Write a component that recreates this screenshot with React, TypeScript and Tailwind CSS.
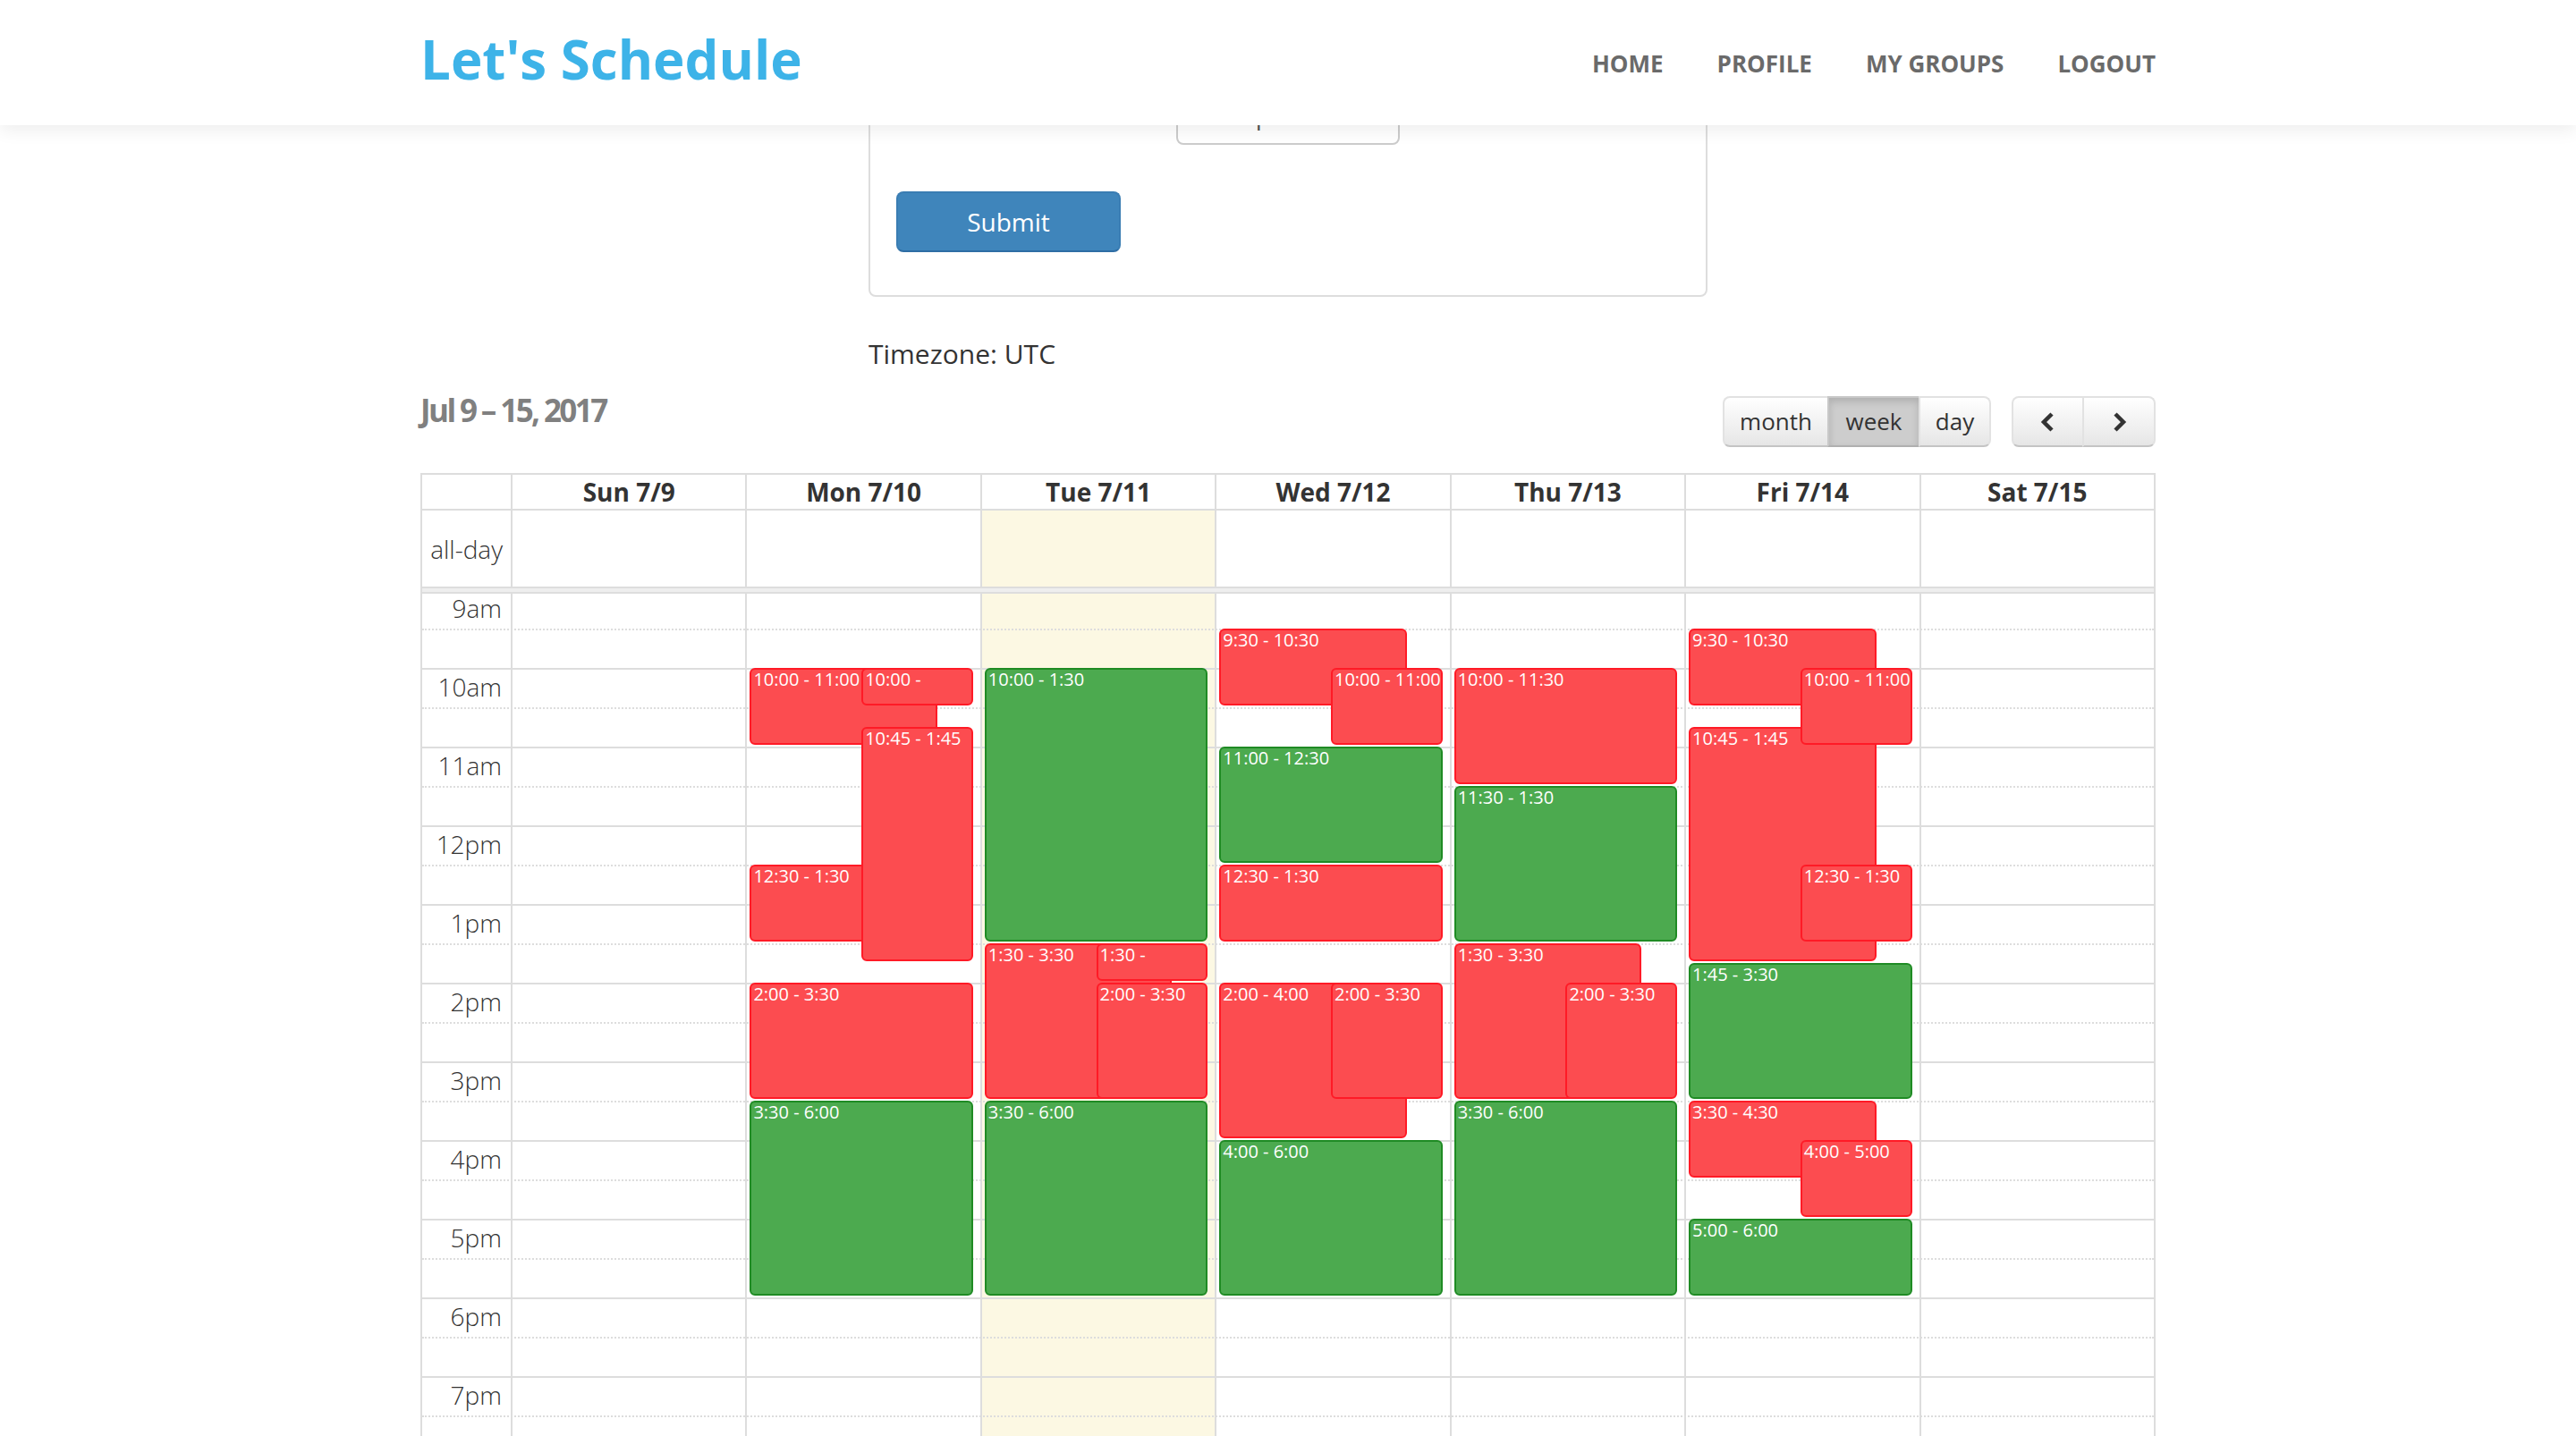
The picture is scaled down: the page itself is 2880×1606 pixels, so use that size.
import React from 'react';

type Ev = { s: number; e: number; t: string; green?: boolean; half?: boolean; push?: boolean };

const HOUR = 88;
const FIRST = 9;
// the 9am slot is scrolled 5px up under the all-day divider
const SCROLL = 5;

const days: { label: string; today?: boolean; events: Ev[] }[] = [
  { label: 'Sun 7/9', events: [] },
  {
    label: 'Mon 7/10',
    events: [
      { s: 10, e: 11, t: '10:00 - 11:00', push: true },
      { s: 12.5, e: 13.5, t: '12:30 - 1:30', push: true },
      { s: 14, e: 15.5, t: '2:00 - 3:30' },
      { s: 15.5, e: 18, t: '3:30 - 6:00', green: true },
      { s: 10, e: 10.5, t: '10:00 -', half: true },
      { s: 10.75, e: 13.75, t: '10:45 - 1:45', half: true },
    ],
  },
  {
    label: 'Tue 7/11',
    today: true,
    events: [
      { s: 10, e: 13.5, t: '10:00 - 1:30', green: true },
      { s: 13.5, e: 15.5, t: '1:30 - 3:30', push: true },
      { s: 15.5, e: 18, t: '3:30 - 6:00', green: true },
      { s: 13.5, e: 14, t: '1:30 -', half: true },
      { s: 14, e: 15.5, t: '2:00 - 3:30', half: true },
    ],
  },
  {
    label: 'Wed 7/12',
    events: [
      { s: 9.5, e: 10.5, t: '9:30 - 10:30', push: true },
      { s: 11, e: 12.5, t: '11:00 - 12:30', green: true },
      { s: 12.5, e: 13.5, t: '12:30 - 1:30' },
      { s: 14, e: 16, t: '2:00 - 4:00', push: true },
      { s: 16, e: 18, t: '4:00 - 6:00', green: true },
      { s: 10, e: 11, t: '10:00 - 11:00', half: true },
      { s: 14, e: 15.5, t: '2:00 - 3:30', half: true },
    ],
  },
  {
    label: 'Thu 7/13',
    events: [
      { s: 10, e: 11.5, t: '10:00 - 11:30' },
      { s: 11.5, e: 13.5, t: '11:30 - 1:30', green: true },
      { s: 13.5, e: 15.5, t: '1:30 - 3:30', push: true },
      { s: 15.5, e: 18, t: '3:30 - 6:00', green: true },
      { s: 14, e: 15.5, t: '2:00 - 3:30', half: true },
    ],
  },
  {
    label: 'Fri 7/14',
    events: [
      { s: 9.5, e: 10.5, t: '9:30 - 10:30', push: true },
      { s: 10.75, e: 13.75, t: '10:45 - 1:45', push: true },
      { s: 13.75, e: 15.5, t: '1:45 - 3:30', green: true },
      { s: 15.5, e: 16.5, t: '3:30 - 4:30', push: true },
      { s: 17, e: 18, t: '5:00 - 6:00', green: true },
      { s: 10, e: 11, t: '10:00 - 11:00', half: true },
      { s: 12.5, e: 13.5, t: '12:30 - 1:30', half: true },
      { s: 16, e: 17, t: '4:00 - 5:00', half: true },
    ],
  },
  { label: 'Sat 7/15', events: [] },
];

// visible hours of the week view (the rest is scrolled away)
const hours = ['9am', '10am', '11am', '12pm', '1pm', '2pm', '3pm', '4pm', '5pm', '6pm', '7pm'];

function Chevron({ dir }: { dir: 'left' | 'right' }) {
  return (
    <svg width="17" height="24" viewBox="0 0 17 24" fill="none">
      <polyline
        points={dir === 'left' ? '13,3 4,12 13,21' : '4,3 13,12 4,21'}
        stroke="#333"
        strokeWidth="4.5"
        strokeLinejoin="miter"
      />
    </svg>
  );
}

function EventBox({ ev }: { ev: Ev }) {
  return (
    <div
      className={`absolute overflow-hidden rounded-[6px] border-2 px-[2px] text-[20px] leading-[22px] whitespace-nowrap text-white ${
        ev.green ? 'bg-[#4caa4f] border-[#1f8b24]' : 'bg-[#fc4c50] border-[#ff1a26]'
      }`}
      style={{
        top: (ev.s - FIRST) * HOUR - SCROLL,
        height: (ev.e - ev.s) * HOUR - 2,
        left: ev.half ? '50%' : 0,
        right: 0,
        marginRight: ev.push ? 40 : 0,
      }}
    >
      {ev.t}
    </div>
  );
}

export default function App() {
  return (
    <div className="relative h-[1606px] overflow-hidden bg-white font-['Open_Sans',sans-serif] text-[#333]">
      {/* top bar */}
      <header className="absolute inset-x-0 top-0 z-20 h-[140px] bg-white shadow-[0_6px_18px_rgba(0,0,0,0.07)]">
        <div className="mx-auto flex h-full w-[1940px] items-center justify-between">
          <div className="pb-[8px] text-[60px] font-bold leading-[80px] text-[#3db3e8]">Let's Schedule</div>
          <nav className="flex items-center gap-[60px] pt-[2px] text-[26px] font-bold text-[#6a6a6a]">
            <span>HOME</span>
            <span>PROFILE</span>
            <span>MY GROUPS</span>
            <span>LOGOUT</span>
          </nav>
        </div>
      </header>

      <main className="mx-auto w-[1940px]">
        {/* form card, scrolled partly under the bar */}
        <div className="mx-auto w-[938px] rounded-[8px] border-2 border-[#ddd] px-[29px] pt-[92px] pb-[48px]">
          <div className="mx-auto h-[68px] w-[250px] rounded-[8px] border-2 border-[#ccc] px-[24px] text-[28px] leading-[64px] text-[#555]">
            9:00 pm
          </div>
          <button className="mt-[52px] h-[68px] w-[251px] rounded-[8px] border-2 border-[#3a7db3] border-b-[#2e6da4] bg-[#3f85bb] text-[28px] text-white">
            Submit
          </button>
        </div>

        <div className="mx-auto mt-[44px] w-[938px] text-[30px] leading-[40px] text-[#333]">Timezone: UTC</div>

        {/* calendar toolbar */}
        <div className="mt-[19px] flex items-start justify-between">
          <h2 className="pt-[2px] text-[35px] font-bold leading-[44px] tracking-[-2.6px] text-[#808080]">Jul 9 – 15, 2017</h2>
          <div className="mt-[8px] flex gap-[23px] text-[26px] text-[#333]">
            <div className="flex h-[57px]">
              <button className="w-[119px] rounded-l-[8px] border-2 border-[#e2e2e2] border-b-[#c4c4c4] bg-gradient-to-b from-white to-[#e6e6e6]">month</button>
              <button className="-ml-[2px] w-[104px] border-2 border-[#c8c8c8] border-b-[#b0b0b0] bg-[#cdcdcd] shadow-[inset_0_4px_8px_rgba(0,0,0,0.15)]">week</button>
              <button className="-ml-[2px] w-[81px] rounded-r-[8px] border-2 border-[#e2e2e2] border-b-[#c4c4c4] bg-gradient-to-b from-white to-[#e6e6e6]">day</button>
            </div>
            <div className="flex h-[57px]">
              <button className="flex w-[81px] items-center justify-center rounded-l-[8px] border-2 border-[#e2e2e2] border-b-[#c4c4c4] bg-gradient-to-b from-white to-[#e6e6e6]">
                <Chevron dir="left" />
              </button>
              <button className="-ml-[2px] flex w-[82px] items-center justify-center rounded-r-[8px] border-2 border-[#e2e2e2] border-b-[#c4c4c4] bg-gradient-to-b from-white to-[#e6e6e6]">
                <Chevron dir="right" />
              </button>
            </div>
          </div>
        </div>

        {/* week grid */}
        <div className="mt-[29px] border-2 border-[#ddd]">
          <div className="flex h-[40px] border-b-2 border-[#ddd]">
            <div className="w-[99px]" />
            {days.map((d) => (
              <div key={d.label} className="flex min-w-0 flex-1 items-center justify-center border-l-2 border-[#ddd] text-[28px] font-bold leading-[38px]">
                {d.label}
              </div>
            ))}
          </div>

          <div className="flex h-[85px]">
            <div className="flex w-[99px] items-center justify-end pr-[9px] text-[28px] font-light">all-day</div>
            {days.map((d) => (
              <div key={d.label} className={`min-w-0 flex-1 border-l-2 border-[#ddd] ${d.today ? 'bg-[#fcf8e3]' : ''}`} />
            ))}
          </div>

          <div className="h-[8px] border-y-2 border-[#ddd] bg-[#eee]" />

          <div className="relative">
            {/* column backgrounds */}
            <div className="absolute inset-0 flex">
              <div className="w-[99px]" />
              {days.map((d) => (
                <div key={d.label} className={`min-w-0 flex-1 border-l-2 border-[#ddd] ${d.today ? 'bg-[#fcf8e3]' : ''}`} />
              ))}
            </div>

            {/* slots */}
            <div className="relative">
              {hours.map((h, i) => (
                <React.Fragment key={h}>
                  {i === 0 ? (
                    <div className="flex h-[39px]">
                      <div className="flex w-[99px] items-center justify-end pr-[10px] pb-[7px] text-[28px] font-light leading-[30px]">{h}</div>
                    </div>
                  ) : (
                    <div className="flex h-[44px] border-t-2 border-[#ddd]">
                      <div className="flex w-[99px] items-center justify-end pr-[10px] pb-[4px] text-[28px] font-light leading-[30px]">{h}</div>
                    </div>
                  )}
                  <div className="h-[44px] border-t-2 border-dotted border-[#ddd]" />
                </React.Fragment>
              ))}
            </div>

            {/* events */}
            <div className="absolute inset-0 flex">
              <div className="w-[99px]" />
              {days.map((d) => (
                <div key={d.label} className="relative min-w-0 flex-1 border-l-2 border-transparent">
                  <div className="absolute top-0 right-[8px] bottom-0 left-[3px]">
                    {d.events.map((ev, i) => (
                      <EventBox key={i} ev={ev} />
                    ))}
                  </div>
                </div>
              ))}
            </div>
          </div>
        </div>
      </main>
    </div>
  );
}
